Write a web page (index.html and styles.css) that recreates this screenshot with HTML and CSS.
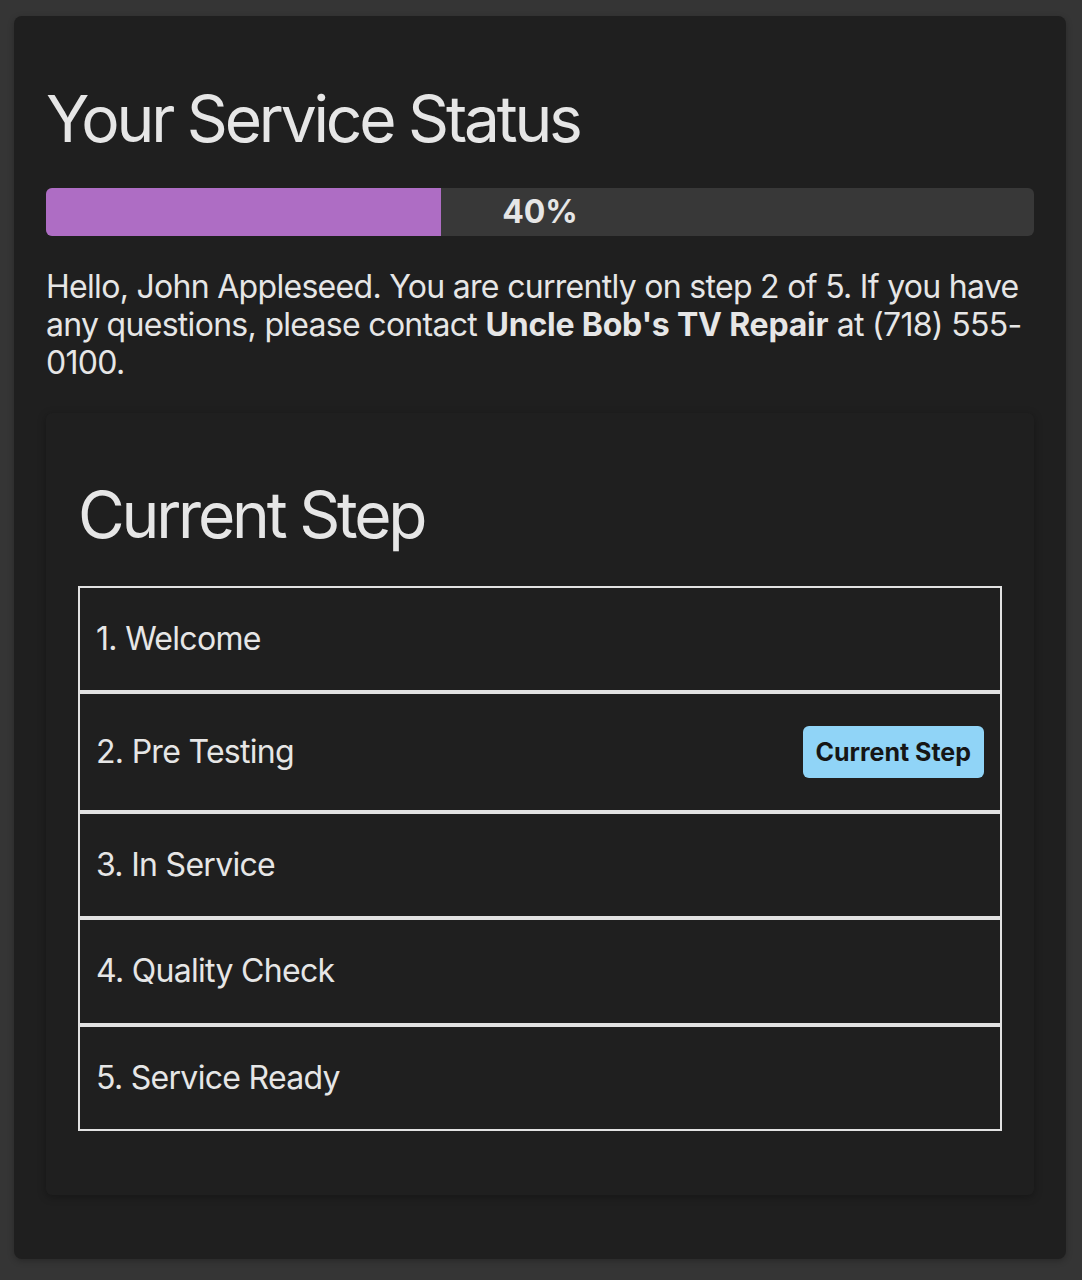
FILE: index.html
```html
<!DOCTYPE html>
<html lang="en">
<head>
    <meta charset="UTF-8">
    <meta name="viewport" content="width=device-width, initial-scale=1.0">
    <title>Your Service Status</title>
    <link rel="stylesheet" href="styles.css">
</head>
<body>

    <main class="status-card">
        <h1>Your Service Status</h1>

        <div class="progress">
            <div class="progress-fill" style="width: 40%;"></div>
            <span class="progress-label">40%</span>
        </div>

        <p class="intro">
            Hello, John Appleseed. You are currently on step 2 of 5. If you have any questions, please contact <strong>Uncle Bob's TV Repair</strong> at (718) 555-0100.
        </p>

        <section class="step-card">
            <h2>Current Step</h2>
            <ul class="steps">
                <li class="step">1. Welcome</li>
                <li class="step">2. Pre Testing <span class="badge">Current Step</span></li>
                <li class="step">3. In Service</li>
                <li class="step">4. Quality Check</li>
                <li class="step">5. Service Ready</li>
            </ul>
        </section>
    </main>

</body>
</html>
```

FILE: styles.css
```css
body {
    margin: 0;
    padding: 16px 16px 16px 14px;
    background-color: #353535;
    color: #e6e6e6;
    font-family: 'Inter', 'Noto Sans', sans-serif;
    font-size: 32px;
    line-height: 1.2;
}

.status-card {
    background-color: #1f1f1f;
    border-radius: 8px;
    padding: 32px;
    box-shadow: 0 2px 6px rgba(0, 0, 0, 0.25);
}

h1,
h2 {
    font-size: 64px;
    font-weight: 400;
    line-height: 1.2;
    letter-spacing: -3.2px;
    margin: 32px 0;
}

h1 {
    margin: 33px 0 30px;
}

.progress {
    position: relative;
    height: 48px;
    background-color: #383838;
    border-radius: 6px;
    overflow: hidden;
    display: flex;
    align-items: center;
    justify-content: center;
}

.progress-fill {
    position: absolute;
    left: 0;
    top: 0;
    bottom: 0;
    background-color: #ae6dc4;
}

.progress-label {
    position: relative;
    font-weight: 700;
}

.intro {
    line-height: 38px;
    letter-spacing: -0.7px;
    margin: 32px 0 31px;
}

.intro strong {
    font-weight: 700;
    letter-spacing: -0.2px;
}

.step-card {
    background-color: #1f1f1f;
    border-radius: 6px;
    padding: 32px;
    margin: 31px 0 32px;
    box-shadow: 0 2px 8px rgba(0, 0, 0, 0.3);
}

.steps {
    list-style: none;
    margin: 32px 0;
    padding: 0;
}

.step {
    display: flex;
    align-items: center;
    justify-content: space-between;
    padding: 32px 16px;
    border: 2px solid #e2e2e2;
    letter-spacing: -0.7px;
}

.badge {
    background-color: #90d4f7;
    color: #161616;
    font-size: 25px;
    font-weight: 700;
    letter-spacing: 0;
    padding: 11px 13px;
    border-radius: 6px;
}
```
